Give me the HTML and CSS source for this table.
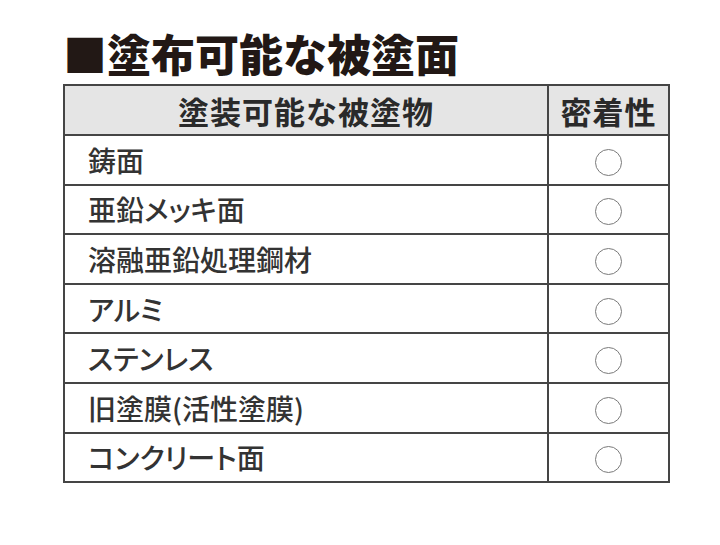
FILE: index.html
```html
<!DOCTYPE html>
<html lang="ja">
<head>
<meta charset="utf-8">
<link rel="stylesheet" href="styles.css">
</head>
<body>
<div class="page">
  <h1 class="title">■塗布可能な被塗面</h1>
  <table class="spec">
    <thead>
      <tr><th class="c-name">塗装可能な被塗物</th><th class="c-mark">密着性</th></tr>
    </thead>
    <tbody>
      <tr><td class="c-name">鋳面</td><td class="c-mark"><span class="ok"></span></td></tr>
      <tr><td class="c-name">亜鉛メッキ面</td><td class="c-mark"><span class="ok"></span></td></tr>
      <tr><td class="c-name">溶融亜鉛処理鋼材</td><td class="c-mark"><span class="ok"></span></td></tr>
      <tr><td class="c-name">アルミ</td><td class="c-mark"><span class="ok"></span></td></tr>
      <tr><td class="c-name">ステンレス</td><td class="c-mark"><span class="ok"></span></td></tr>
      <tr><td class="c-name">旧塗膜(活性塗膜)</td><td class="c-mark"><span class="ok"></span></td></tr>
      <tr><td class="c-name">コンクリート面</td><td class="c-mark"><span class="ok"></span></td></tr>
    </tbody>
  </table>
</div>
</body>
</html>
```
FILE: styles.css
```css
html, body {
  margin: 0;
  padding: 0;
  background: #ffffff;
}
body {
  font-family: "Noto Sans CJK JP", "Noto Sans", sans-serif;
  color: #2e2e2e;
}
.page {
  padding: 26px 0 0 63px;
}
.title {
  margin: 0 0 4px 0;
  font-size: 44px;
  line-height: 54px;
  font-weight: 900;
  color: #221815;
  letter-spacing: 0;
}
.spec {
  border-collapse: collapse;
  width: 607px;
  table-layout: fixed;
  border: 2px solid #454545;
}
.spec th, .spec td {
  border: 2px solid #454545;
  padding: 0;
}
.spec thead th {
  height: 48px;
  background: #e5e5e5;
  font-size: 31px;
  font-weight: 700;
  color: #2a2a2a;
  text-align: center;
  line-height: 1;
  letter-spacing: 1px;
}
.spec td {
  height: 47.6px;
  font-size: 28px;
  font-weight: 500;
  line-height: 1;
  font-feature-settings: "palt";
  color: #333333;
}
.spec .c-name {
  width: 482px;
}
.spec td.c-name {
  padding-left: 23px;
}
.spec .c-mark {
  text-align: center;
}
.ok {
  display: inline-block;
  width: 25px;
  height: 25px;
  border: 1.6px solid #7a7a7a;
  border-radius: 50%;
  vertical-align: middle;
}
```
